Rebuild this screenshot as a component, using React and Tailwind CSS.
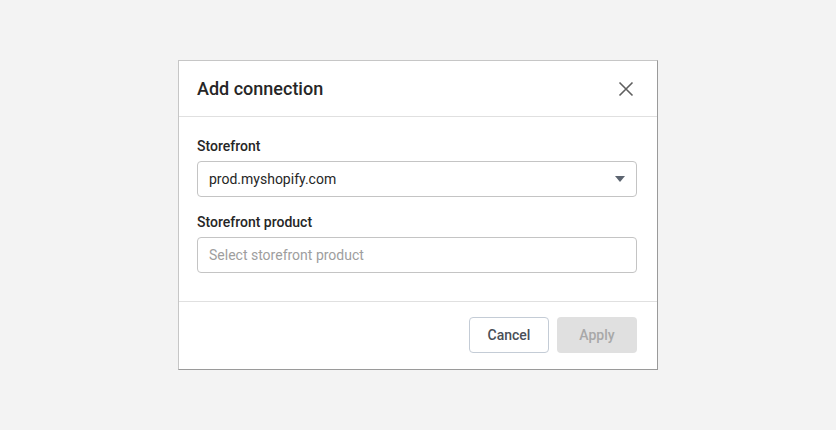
export default function App() {
  return (
    <div className="w-[836px] h-[430px] bg-[#f3f3f3] flex items-start justify-center pt-[60px]" style={{ fontFamily: "Roboto, 'Liberation Sans', sans-serif" }}>
      <div className="w-[480px] h-[310px] bg-white border border-t-[#c6c6c6] border-l-[#c6c6c6] border-r-[#9a9a9a] border-b-[#9a9a9a] flex flex-col">
        <div className="h-[56px] flex items-center justify-between pl-[18px] pr-[20px] border-b border-[#e0e0e0]">
          <h2 className="text-[18px] font-medium text-[#262626] leading-none">Add connection</h2>
          <button className="w-[24px] h-[24px] flex items-center justify-center text-[#5f5f5f] -mr-[1px]">
            <svg width="16" height="16" viewBox="0 0 16 16" fill="none" stroke="currentColor" strokeWidth="1.6">
              <path d="M1.5 1.5 L14.5 14.5 M14.5 1.5 L1.5 14.5" />
            </svg>
          </button>
        </div>
        <div className="flex-1 pl-[18px] pr-[20px] pt-[19px] flex flex-col">
          <label className="text-[14px] font-medium text-[#262626] leading-[20px] mb-[5px]">Storefront</label>
          <div className="h-[36px] border border-[#c4c4c4] rounded-[4px] flex items-center justify-between pl-[11px] pr-[11px]">
            <span className="text-[14px] text-[#262626]">prod.myshopify.com</span>
            <svg width="10" height="6" viewBox="0 0 10 6"><path d="M0 0 L10 0 L5 6 Z" fill="#5c6470" /></svg>
          </div>
          <label className="text-[14px] font-medium text-[#262626] leading-[20px] mt-[15px] mb-[5px]">Storefront product</label>
          <div className="h-[36px] border border-[#c4c4c4] rounded-[4px] flex items-center pl-[11px]">
            <span className="text-[14px] text-[#9e9e9e]">Select storefront product</span>
          </div>
        </div>
        <div className="h-[68px] border-t border-[#e0e0e0] flex items-start justify-end gap-[8px] pr-[20px] pt-[15px]">
          <button className="w-[80px] h-[36px] border border-[#c4ccd6] rounded-[4px] bg-white text-[14px] font-medium text-[#4a4f57]">Cancel</button>
          <button className="w-[80px] h-[36px] rounded-[4px] bg-[#e0e0e0] text-[14px] font-medium text-[#a8a8a8]">Apply</button>
        </div>
      </div>
    </div>
  );
}
